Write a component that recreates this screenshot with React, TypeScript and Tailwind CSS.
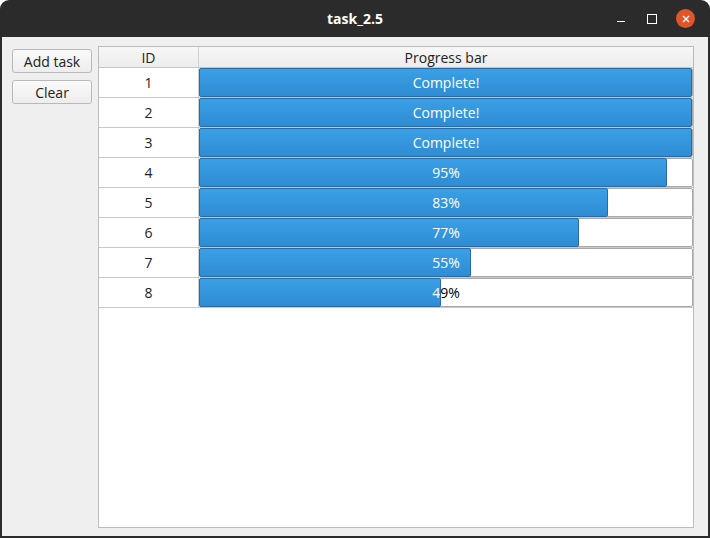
import React from 'react'

type Task = {
  id: number
  value: number
}

const tasks: Task[] = [
  { id: 1, value: 100 },
  { id: 2, value: 100 },
  { id: 3, value: 100 },
  { id: 4, value: 95 },
  { id: 5, value: 83 },
  { id: 6, value: 77 },
  { id: 7, value: 55 },
  { id: 8, value: 49 },
]

const font = { fontFamily: '"Open Sans", "DejaVu Sans", sans-serif' }

function ProgressBar({ value }: { value: number }) {
  const label = value >= 100 ? 'Complete!' : `${value}%`
  return (
    <div className="relative h-[29px] w-full rounded-[2px] border border-[#a9a9a9] bg-white">
      <div className="flex h-full items-center justify-center text-[14px] text-black">{label}</div>
      {/* filled chunk, with white copy of the label clipped to it */}
      <div
        className="absolute -left-px -top-px -bottom-px overflow-hidden rounded-[2px] border border-[#2a6ba6] bg-gradient-to-b from-[#3aa0e6] to-[#2f8cd3]"
        style={{ width: `calc(${value}% + 1px)` }}
      >
        <div className="flex h-full w-[492px] items-center justify-center text-[14px] text-white">{label}</div>
      </div>
    </div>
  )
}

export default function App() {
  return (
    <div className="flex h-[538px] w-[710px] flex-col overflow-hidden rounded-t-[9px] bg-[#2b2b2b]" style={font}>
      {/* Title bar */}
      <div className="relative flex h-[37px] shrink-0 items-center justify-center">
        <span className="text-[14px] font-bold text-white">task_2.5</span>
        <div className="absolute right-[15px] top-0 flex h-full items-center">
          <div className="mt-[6px] h-[1px] w-[8px] bg-white" />
          <div className="ml-[22px] h-[10px] w-[10px] border border-white" />
          <div className="ml-[19px] flex h-[19px] w-[19px] items-center justify-center rounded-full bg-[#e05629]">
            <svg width="8" height="8" viewBox="0 0 8 8">
              <path d="M1 1 L7 7 M7 1 L1 7" stroke="white" strokeWidth="1.4" />
            </svg>
          </div>
        </div>
      </div>

      {/* Window body */}
      <div className="mx-[2px] mb-[2px] flex flex-1 gap-[6px] bg-[#efefef] pb-[8px] pl-[10px] pr-[12px] pt-[9px]">
        <div className="mt-[3px] flex w-[80px] flex-col gap-[7px]">
          <button className="h-[24px] rounded-[3px] border border-[#b9b9b9] bg-gradient-to-b from-[#fafafa] to-[#ededed] text-[14px] text-[#222]">
            Add task
          </button>
          <button className="h-[24px] rounded-[3px] border border-[#b9b9b9] bg-gradient-to-b from-[#fafafa] to-[#ededed] text-[14px] text-[#222]">
            Clear
          </button>
        </div>

        <div className="flex w-[596px] flex-col border border-[#bcbcbc] bg-white">
          <div className="flex h-[21px] border-b border-[#c6c6c6] bg-gradient-to-b from-[#f7f7f7] to-[#ececec] text-[14px] text-[#222]">
            <div className="flex w-[100px] items-center justify-center border-r border-[#d0d0d0]">ID</div>
            <div className="flex flex-1 items-center justify-center">Progress bar</div>
          </div>
          {tasks.map(t => (
            <div key={t.id} className="flex h-[30px] border-b border-[#c8c8c8]">
              <div className="flex w-[100px] items-center justify-center border-r border-[#d0d0d0] text-[14px] text-[#222]">
                {t.id}
              </div>
              <div className="flex-1">
                <ProgressBar value={t.value} />
              </div>
            </div>
          ))}
        </div>
      </div>
    </div>
  )
}
